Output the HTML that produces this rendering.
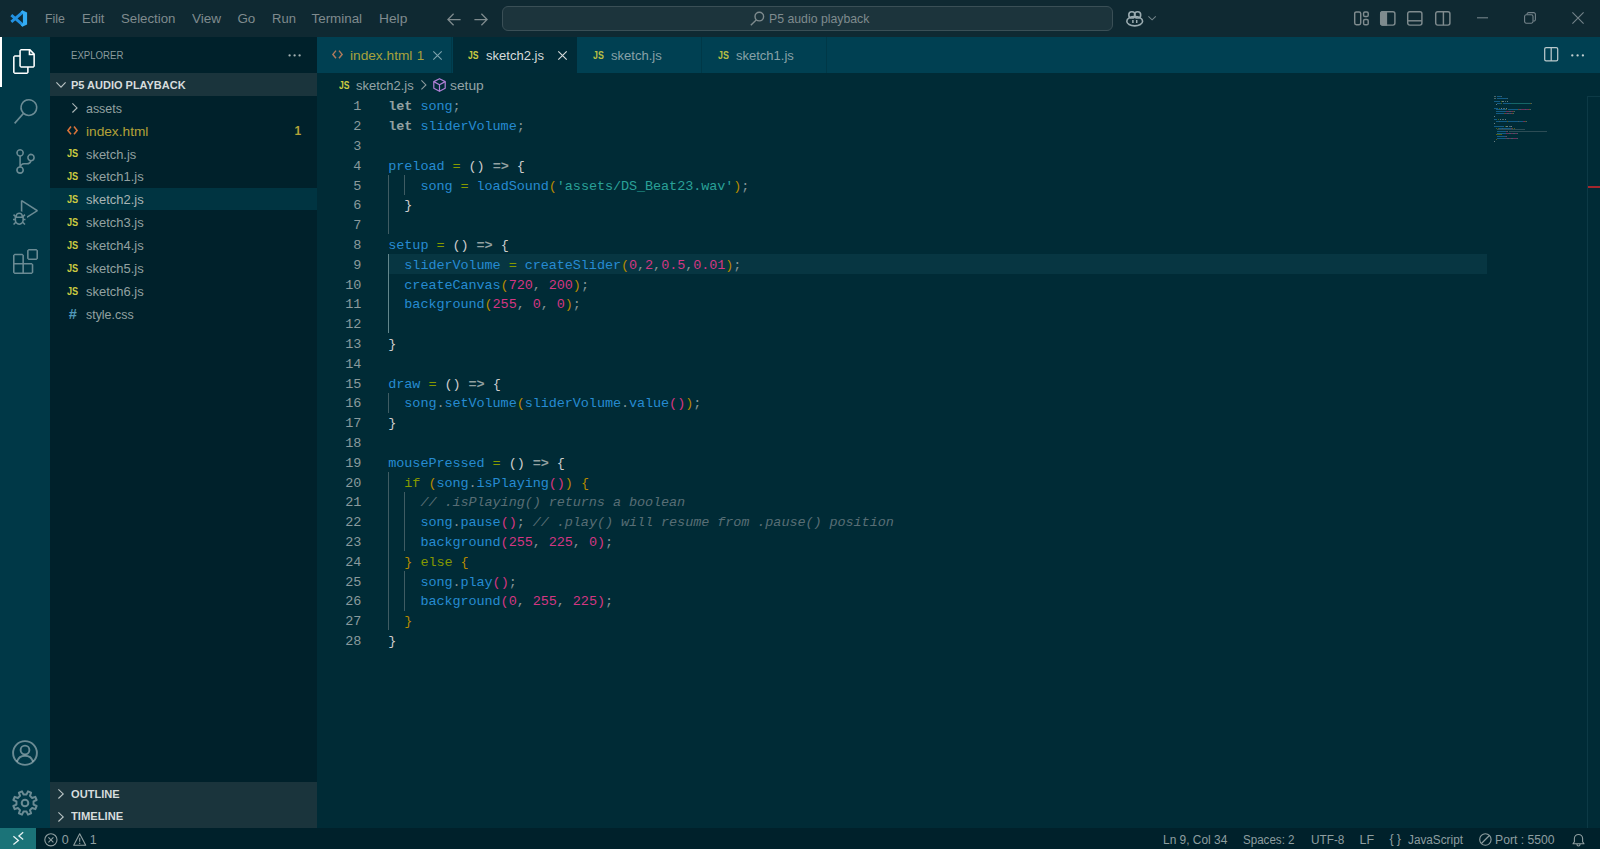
<!DOCTYPE html>
<html lang="en">
<head>
<meta charset="utf-8">
<title>sketch2.js - P5 audio playback - Visual Studio Code</title>
<style>
*{box-sizing:border-box;margin:0;padding:0}
html,body{width:1600px;height:849px;overflow:hidden;background:#002B36}
body{position:relative;font-family:"Liberation Sans",sans-serif;font-size:13.4px;color:#93A1A1;line-height:1}
svg{display:block;position:absolute;overflow:visible}
.t{position:absolute;white-space:pre;line-height:20px;height:20px;transform-origin:0 50%}
.bx{position:absolute}
/* title bar */
#titlebar{position:absolute;left:0;top:0;width:1600px;height:36.5px;background:#0F2932}
#cmd{position:absolute;left:502.3px;top:5.6px;width:610.4px;height:25.3px;border:1px solid #3A4F56;border-radius:6px;background:#1C343C}
/* activity bar */
#activity{position:absolute;left:0;top:36.5px;width:50px;height:791.3px;background:#003847}
#activity .ind{position:absolute;left:0;top:0;width:2px;height:50px;background:#fff}
/* side bar */
#sidebar{position:absolute;left:50px;top:36.5px;width:266.9px;height:791.3px;background:#00212B}
.sechead{position:absolute;left:50px;width:266.9px;height:22.9px;background:#1A343C}
.rowsel{position:absolute;left:50px;width:266.9px;height:22.9px;background:#003441}
/* editor */
#tabs{position:absolute;left:316.9px;top:36.5px;width:1283.1px;height:36.4px;background:#004052}
.tab{position:absolute;top:36.5px;height:36.4px;background:#004052;border-right:1px solid #003847}
.tab.active{background:#002B37;border-right:none}
#code{position:absolute;left:0;top:0;width:1600px;height:849px;font-family:"Liberation Mono",monospace;font-size:13.5px;letter-spacing:-0.08px;pointer-events:none}
.hl{position:absolute;left:388.8px;top:253.9px;width:1098.5px;height:19.9px;background:#073642}
.ln{position:absolute;left:316.9px;width:44.3px;text-align:right;height:19.8px;line-height:19.8px;color:#8A9B9D}
.ln.cur{color:#949494}
.cl{position:absolute;left:388.3px;height:19.8px;line-height:19.8px;white-space:pre;color:#839496}
.k{color:#93A1A1;font-weight:700}.v{color:#268BD2}.o{color:#859900}.s{color:#2AA198}.n{color:#D33682}
.c{color:#586E75;font-style:italic}.p{color:#839496}.b1{color:#CDCDCD}.b2{color:#B58900}.b3{color:#D33682}
.ig{position:absolute;width:1px;background:#3F5C63}
.ig.act{background:#62868C}
#minimap{position:absolute;left:0;top:0;opacity:.5}
#minimap i{position:absolute;height:1px;display:block}
/* status bar */
#status{position:absolute;left:0;top:827.8px;width:1600px;height:21.2px;background:#00212B}
#remote{position:absolute;left:0;top:0;width:36px;height:21.2px;background:#1B7378}
</style>
</head>
<body>
<div id="titlebar"><div id="cmd"></div></div>
<div id="activity"><div class="ind"></div></div>
<div id="sidebar"></div>
<div class="sechead" style="top:73px"></div>
<div class="rowsel" style="top:187.5px"></div>
<div class="sechead" style="top:782px"></div>
<div class="sechead" style="top:804.9px"></div>
<div id="tabs"></div>
<div class="tab" style="left:316.9px;width:135.6px"></div>
<div class="tab active" style="left:452.5px;width:124.8px"></div>
<div class="tab" style="left:577.3px;width:124.9px"></div>
<div class="tab" style="left:702.2px;width:125.1px"></div>
<div id="status"><div id="remote"></div></div>
<div class="hl"></div>
<!-- vscode logo -->
<svg style="left:10px;top:9.700px" width="17.300" height="17" viewBox="0 0 17.300 17"><path d="M1.300 5.200 13.400 15.300M1.300 11.800 13.400 1.700" fill="none" stroke="#2292E2" stroke-width="2.900"/><path d="M12.300.300 17.100 2.500v12l-4.800 2.200-1.700-1.600 2.300-1.700V3.600L10.600 1.900z" fill="#33ACF4"/></svg>
<!-- nav arrows -->
<svg style="left:446.5px;top:12.5px" width="14" height="13" viewBox="0 0 14 13" fill="none" stroke="#7F8B8E" stroke-width="1.25"><path d="M6.6.8.9 6.5l5.7 5.7M1 6.5h12.6"/></svg>
<svg style="left:473.5px;top:12.5px" width="14" height="13" viewBox="0 0 14 13" fill="none" stroke="#7F8B8E" stroke-width="1.25"><path d="M7.4.8l5.7 5.7-5.7 5.7M13 6.5H.4"/></svg>
<!-- search in command center -->
<svg style="left:749.5px;top:10.5px" width="15" height="15" viewBox="0 0 15 15" fill="none" stroke="#7F8B8E" stroke-width="1.400"><circle cx="9.3" cy="5.600" r="4.300"/><path d="M6.2 8.9.8 14.3"/></svg>
<!-- copilot -->
<svg style="left:1126px;top:10.900px" width="18" height="16" viewBox="0 0 18 16" fill="none" stroke="#9AABB0" stroke-width="1.600"><ellipse cx="8.700" cy="10.200" rx="7.900" ry="4.700"/><circle cx="5.900" cy="3.900" r="3.100"/><circle cx="11.600" cy="3.900" r="3.100"/><path d="M6.900 8.900v3M10.700 8.900v3" stroke-width="1.500"/></svg>
<svg style="left:1147.600px;top:16px" width="9" height="5" viewBox="0 0 9 5" fill="none" stroke="#73848A" stroke-width="1.050"><path d="M.4.400l3.700 3.500L7.800.400"/></svg>
<!-- layout controls -->
<svg style="left:1353.8px;top:11.2px" width="15" height="15" viewBox="0 0 15 15" fill="none" stroke="#7F8B8E" stroke-width="1.450"><rect x=".7" y=".9" width="6" height="12.800" rx="1.6"/><rect x="9.6" y=".9" width="4.600" height="4.600" rx="1.300"/><rect x="9.6" y="8.400" width="4.600" height="5.300" rx="1.300"/></svg>
<svg style="left:1380.3px;top:11px" width="16" height="15" viewBox="0 0 16 15" fill="none" stroke="#7F8B8E" stroke-width="1.450"><rect x=".7" y=".7" width="14.200" height="13.400" rx="2"/><path d="M.7 2.500a1.800 1.800 0 0 1 1.800-1.800H6.400v13.400H2.500a1.800 1.800 0 0 1-1.800-1.800z" fill="#7F8B8E"/></svg>
<svg style="left:1407.4px;top:11px" width="16" height="15" viewBox="0 0 16 15" fill="none" stroke="#7F8B8E" stroke-width="1.450"><rect x=".7" y=".7" width="14.200" height="13.400" rx="2"/><path d="M.7 9.800h14.200"/></svg>
<svg style="left:1434.6px;top:11px" width="16" height="15" viewBox="0 0 16 15" fill="none" stroke="#7F8B8E" stroke-width="1.450"><rect x=".7" y=".7" width="14.200" height="13.400" rx="2"/><path d="M8.400.7v13.400"/></svg>
<!-- window controls -->
<svg style="left:1477.3px;top:16.5px" width="11" height="2" viewBox="0 0 11 2"><path d="M0 .8h11" stroke="#74838A" stroke-width="1.1"/></svg>
<svg style="left:1523.6px;top:12.2px" width="12" height="12" viewBox="0 0 12 12" fill="none" stroke="#74838A" stroke-width="1.1"><rect x=".6" y="2.800" width="8.400" height="8.400" rx="1.600"/><path d="M3 2.500V2.200A1.600 1.600 0 0 1 4.600.6h5A1.800 1.800 0 0 1 11.400 2.400v5a1.600 1.600 0 0 1-1.600 1.600H9.300"/></svg>
<svg style="left:1572px;top:12.2px" width="12" height="12" viewBox="0 0 12 12" fill="none" stroke="#74838A" stroke-width="1.1"><path d="M.4.400l11.200 11.200M11.600.400.400 11.600"/></svg>
<!-- activity bar -->
<svg style="left:12.3px;top:49.200px" width="25" height="25" viewBox="0 0 24 24" fill="#FFFFFF"><path d="M17.500 0h-9L7 1.500V6H2.500L1 7.500v15.070L2.500 24h12.070L16 22.570V18h4.700l1.300-1.430V4.500L17.500 0zm0 2.120l2.380 2.380H17.500V2.120zm-3 20.380h-12v-15H7v9.070L8.500 18h6v4.500zm6-6h-12v-15H16V6h4.500v10.500z"/></svg>
<svg style="left:13px;top:99px" width="25" height="25" viewBox="0 0 24 24" fill="rgba(255,255,255,.42)"><path d="M15.250 0a8.250 8.250 0 0 0-6.180 13.720L1 22.880l1.120 1 8.050-9.120A8.251 8.251 0 1 0 15.250.010V0zm0 15a6.750 6.750 0 1 1 0-13.500 6.750 6.750 0 0 1 0 13.500z"/></svg>
<svg style="left:12.5px;top:149.300px" width="25" height="25" viewBox="0 0 24 24" fill="rgba(255,255,255,.42)"><path d="M21.007 8.222A3.738 3.738 0 0 0 15.045 5.200a3.737 3.737 0 0 0 1.156 6.583 2.988 2.988 0 0 1-2.668 1.670h-2.990a4.456 4.456 0 0 0-2.989 1.165V7.400a3.737 3.737 0 1 0-1.494 0v9.117a3.776 3.776 0 1 0 1.816.099 2.990 2.990 0 0 1 2.668-1.667h2.990a4.484 4.484 0 0 0 4.223-3.039 3.736 3.736 0 0 0 3.250-3.687zM4.565 3.738a2.242 2.242 0 1 1 4.484 0 2.242 2.242 0 0 1-4.484 0zm4.484 16.441a2.242 2.242 0 1 1-4.484 0 2.242 2.242 0 0 1 4.484 0zm8.221-9.715a2.242 2.242 0 1 1 0-4.485 2.242 2.242 0 0 1 0 4.485z"/></svg>
<svg style="left:12.5px;top:199.700px" width="25" height="25" viewBox="0 0 24 24" fill="rgba(255,255,255,.42)"><path d="M10.940 13.500l-1.320 1.320a3.730 3.730 0 0 0-7.240 0L1.060 13.500 0 14.560l1.720 1.720-.22.220V18H0v1.500h1.500v.080c.077.489.214.966.410 1.420L0 22.940 1.060 24l1.650-1.650A4.308 4.308 0 0 0 6 24a4.310 4.310 0 0 0 3.290-1.650L10.940 24 12 22.940 10.090 21c.198-.464.336-.951.410-1.450v-.1H12V18h-1.500v-1.500l-.22-.22L12 14.560l-1.060-1.060zM6 13.500a2.250 2.250 0 0 1 2.250 2.250h-4.500A2.250 2.250 0 0 1 6 13.500zm3 6a3.330 3.330 0 0 1-3 3 3.330 3.330 0 0 1-3-3v-2.250h6v2.250zm14.760-9.900v1.260L13.500 17.370V15.600l8.500-5.370L9 2v9.460a5.070 5.070 0 0 0-1.500-.72V.630L8.640 0l15.120 9.600z"/></svg>
<svg style="left:12.500px;top:249.200px" width="25" height="25" viewBox="0 0 24 24" fill="rgba(255,255,255,.42)"><path d="M13.500 1.500L15 0h7.500L24 1.500V9l-1.500 1.500H15L13.500 9V1.500zm1.500 0V9h7.500V1.500H15zM0 15V6l1.500-1.500H9L10.500 6v7.500H18l1.500 1.500v7.500L18 24H1.500L0 22.500V15zm9-1.500V6H1.500v7.500H9zM9 15H1.500v7.500H9V15zm1.500 7.500H18V15h-7.500v7.500z"/></svg>
<!-- account -->
<svg style="left:12.300px;top:739.800px" width="26" height="26" viewBox="0 0 26 26" fill="none" stroke="rgba(255,255,255,.42)" stroke-width="1.900"><circle cx="13" cy="13" r="11.900"/><circle cx="13" cy="10" r="4.400"/><path d="M5 21.500c1.200-3.600 4.200-5.800 8-5.800s6.800 2.200 8 5.800"/></svg>
<svg style="left:12px;top:790.300px" width="26" height="26" viewBox="0 0 26 26" fill="none" stroke="rgba(255,255,255,.42)" stroke-width="2" stroke-linejoin="round"><path d="M21.56 14.54 L24.62 16.00 L23.34 19.10 L20.15 17.96 L17.96 20.15 L19.10 23.34 L16.00 24.62 L14.54 21.56 L11.46 21.56 L10.00 24.62 L6.90 23.34 L8.04 20.15 L5.85 17.96 L2.66 19.10 L1.38 16.00 L4.44 14.54 L4.44 11.46 L1.38 10.00 L2.66 6.90 L5.85 8.04 L8.04 5.85 L6.90 2.66 L10.00 1.38 L11.46 4.44 L14.54 4.44 L16.00 1.38 L19.10 2.66 L17.96 5.85 L20.15 8.04 L23.34 6.90 L24.62 10.00 L21.56 11.46Z"/><circle cx="13" cy="13" r="3.300"/></svg>
<!-- sidebar chevrons / ellipsis -->
<svg style="left:287.500px;top:54px" width="14" height="3" viewBox="0 0 14 3" fill="#A3B0B1"><circle cx="1.600" cy="1.400" r="1.150"/><circle cx="6.600" cy="1.400" r="1.150"/><circle cx="11.600" cy="1.400" r="1.150"/></svg>
<svg style="left:55.500px;top:82px" width="10" height="6" viewBox="0 0 10 6" fill="none" stroke="#B9C3C4" stroke-width="1.150"><path d="M.4.400l4.600 4.800L9.600.400"/></svg>
<svg style="left:72.200px;top:102.800px" width="6" height="10" viewBox="0 0 6 10" fill="none" stroke="#AAB6B7" stroke-width="1.150"><path d="M.4.400l4.600 4.500L.4 9.500"/></svg>
<svg style="left:57.800px;top:788.600px" width="6" height="10" viewBox="0 0 6 10" fill="none" stroke="#B9C3C4" stroke-width="1.150"><path d="M.4.400l4.800 4.500L.4 9.500"/></svg>
<svg style="left:57.800px;top:811.500px" width="6" height="10" viewBox="0 0 6 10" fill="none" stroke="#B9C3C4" stroke-width="1.150"><path d="M.4.400l4.800 4.500L.4 9.500"/></svg>
<!-- tab close buttons -->
<svg style="left:433.200px;top:50.800px" width="9" height="9" viewBox="0 0 9 9" fill="none" stroke="#7DA3AD" stroke-width="1.100"><path d="M.3.300l8.400 8.400M8.700.300.300 8.700"/></svg>
<svg style="left:558.400px;top:50.800px" width="9" height="9" viewBox="0 0 9 9" fill="none" stroke="#D6DBDB" stroke-width="1.150"><path d="M.3.300l8.400 8.400M8.700.300.300 8.700"/></svg>
<!-- editor actions -->
<svg style="left:1544.200px;top:47.400px" width="15" height="15" viewBox="0 0 15 15" fill="none" stroke="#B9C9CC" stroke-width="1.250"><rect x=".7" y=".7" width="13" height="13.200" rx="1.400"/><path d="M7.200.7v13.200"/></svg>
<svg style="left:1571.200px;top:53.700px" width="14" height="3" viewBox="0 0 14 3" fill="#C3D0D2"><circle cx="1.300" cy="1.400" r="1.150"/><circle cx="6.600" cy="1.400" r="1.150"/><circle cx="11.900" cy="1.400" r="1.150"/></svg>
<!-- breadcrumbs -->
<svg style="left:420.600px;top:80.400px" width="6" height="10" viewBox="0 0 6 10" fill="none" stroke="#8C9C9E" stroke-width="1.100"><path d="M.4.400l4.500 4.500L.4 9.400"/></svg>
<svg style="left:432.600px;top:78.200px" width="13" height="14" viewBox="0 0 13 14" fill="none" stroke="#B180D7" stroke-width="1.200" stroke-linejoin="round"><path d="M6.500.700.800 3.600v6.600l5.700 3.100 5.700-3.100V3.600z"/><path d="M.8 3.600l5.700 3.100 5.700-3.100M6.500 6.700v6.600"/></svg>
<!-- status bar icons -->
<svg style="left:12.800px;top:832.400px" width="11" height="13" viewBox="0 0 11 13" fill="none" stroke="#E4F1F1" stroke-width="1.300"><path d="M.4 4.300l5 4.200-5 4.100M10.200.300 5.900 4l4.300 3.600"/></svg>
<svg style="left:44.400px;top:832.800px" width="14" height="14" viewBox="0 0 14 14" fill="none" stroke="#8E9EA0" stroke-width="1.100"><circle cx="6.900" cy="6.800" r="6.100"/><path d="M4.400 4.300l5 5M9.400 4.300l-5 5"/></svg>
<svg style="left:73px;top:832.900px" width="14" height="13" viewBox="0 0 14 13" fill="none" stroke="#8E9EA0" stroke-width="1.100" stroke-linejoin="round"><path d="M6.700.800.700 12.300h12z"/><path d="M6.700 4.800v4M6.700 9.800v1.300"/></svg>
<svg style="left:1479px;top:833.000px" width="13" height="13" viewBox="0 0 13 13" fill="none" stroke="#8E9EA0" stroke-width="1.100"><circle cx="6.400" cy="6.500" r="5.700"/><path d="M2.400 10.500l8-8"/></svg>
<svg style="left:1572px;top:832.600px" width="13" height="14" viewBox="0 0 13 14" fill="none" stroke="#8E9EA0" stroke-width="1.100" stroke-linejoin="round"><path d="M1 10.800h11l-1.400-2.100V5.600a4.100 4.100 0 0 0-8.200 0v3.100z"/><path d="M5 11v.500a1.500 1.500 0 0 0 3 0V11"/></svg>
<!-- scrollbar / overview ruler -->
<div class="bx" style="left:1587px;top:96px;width:1px;height:731.800px;background:#0D3A46"></div>
<div class="bx" style="left:1587px;top:96px;width:13px;height:1px;background:#0D3A46"></div>
<div class="bx" style="left:1588px;top:186px;width:12px;height:2px;background:#A3262D"></div>
<!-- html file icons -->
<svg style="left:67.400px;top:126.300px" width="11" height="9" viewBox="0 0 11 9" fill="none" stroke="#D9733A" stroke-width="1.550"><path d="M4 .6.900 4.400 4 8.200M7 .6l3.100 3.800L7 8.200"/></svg>
<svg style="left:332.200px;top:50.200px" width="11" height="9" viewBox="0 0 11 9" fill="none" stroke="#B07A5C" stroke-width="1.450"><path d="M4 .6.900 4.400 4 8.200M7 .6l3.100 3.800L7 8.200"/></svg>

<div class="t" style="left:45.1px;top:9.2px;font-size:13.4px;color:#7F8B8E;transform:scaleX(0.922)">File</div>
<div class="t" style="left:82.0px;top:9.2px;font-size:13.4px;color:#7F8B8E;transform:scaleX(0.971)">Edit</div>
<div class="t" style="left:121.0px;top:9.2px;font-size:13.4px;color:#7F8B8E;transform:scaleX(0.987)">Selection</div>
<div class="t" style="left:191.9px;top:9.2px;font-size:13.4px;color:#7F8B8E;transform:scaleX(1.011)">View</div>
<div class="t" style="left:237.4px;top:9.2px;font-size:13.4px;color:#7F8B8E">Go</div>
<div class="t" style="left:271.5px;top:9.2px;font-size:13.4px;color:#7F8B8E;transform:scaleX(0.972)">Run</div>
<div class="t" style="left:311.5px;top:9.2px;font-size:13.4px;color:#7F8B8E">Terminal</div>
<div class="t" style="left:378.5px;top:9.2px;font-size:13.4px;color:#7F8B8E;transform:scaleX(1.027)">Help</div>
<div class="t" style="left:768.9px;top:9.2px;font-size:13.4px;color:#7F8B8E;transform:scaleX(0.917)">P5 audio playback</div>
<div class="t" style="left:70.8px;top:45.3px;font-size:11.4px;color:#8A9A9C;transform:scaleX(0.845)">EXPLORER</div>
<div class="t" style="left:70.8px;top:75.0px;font-size:11.4px;color:#D6DCDC;transform:scaleX(0.965);font-weight:700">P5 AUDIO PLAYBACK</div>
<div class="t" style="left:70.9px;top:784.0px;font-size:11.4px;color:#D6DCDC;transform:scaleX(0.974);font-weight:700">OUTLINE</div>
<div class="t" style="left:70.9px;top:805.7px;font-size:11.4px;color:#D6DCDC;transform:scaleX(0.984);font-weight:700">TIMELINE</div>
<div class="t" style="left:85.8px;top:98.7px;font-size:13.4px;color:#93A1A1;transform:scaleX(0.928)">assets</div>
<div class="t" style="left:85.8px;top:121.6px;font-size:13.4px;color:#B3A138;transform:scaleX(1.022)">index.html</div>
<div class="t" style="left:294.5px;top:121.1px;font-size:12px;color:#B3A138;font-weight:700">1</div>
<div class="t" style="left:85.8px;top:144.5px;font-size:13.4px;color:#93A1A1;transform:scaleX(0.964)">sketch.js</div>
<div class="t" style="left:67.3px;top:143.1px;font-size:11px;color:#CBCB41;transform:scaleX(0.832);font-weight:700">JS</div>
<div class="t" style="left:85.8px;top:167.4px;font-size:13.4px;color:#93A1A1;transform:scaleX(0.969)">sketch1.js</div>
<div class="t" style="left:67.3px;top:166.0px;font-size:11px;color:#CBCB41;transform:scaleX(0.832);font-weight:700">JS</div>
<div class="t" style="left:85.8px;top:190.3px;font-size:13.4px;color:#A9B5B5;transform:scaleX(0.969)">sketch2.js</div>
<div class="t" style="left:67.3px;top:188.9px;font-size:11px;color:#CBCB41;transform:scaleX(0.832);font-weight:700">JS</div>
<div class="t" style="left:85.8px;top:213.2px;font-size:13.4px;color:#93A1A1;transform:scaleX(0.969)">sketch3.js</div>
<div class="t" style="left:67.3px;top:211.8px;font-size:11px;color:#CBCB41;transform:scaleX(0.832);font-weight:700">JS</div>
<div class="t" style="left:85.8px;top:236.1px;font-size:13.4px;color:#93A1A1;transform:scaleX(0.969)">sketch4.js</div>
<div class="t" style="left:67.3px;top:234.7px;font-size:11px;color:#CBCB41;transform:scaleX(0.832);font-weight:700">JS</div>
<div class="t" style="left:85.8px;top:259.0px;font-size:13.4px;color:#93A1A1;transform:scaleX(0.969)">sketch5.js</div>
<div class="t" style="left:67.3px;top:257.6px;font-size:11px;color:#CBCB41;transform:scaleX(0.832);font-weight:700">JS</div>
<div class="t" style="left:85.8px;top:281.9px;font-size:13.4px;color:#93A1A1;transform:scaleX(0.969)">sketch6.js</div>
<div class="t" style="left:67.3px;top:280.5px;font-size:11px;color:#CBCB41;transform:scaleX(0.832);font-weight:700">JS</div>
<div class="t" style="left:85.8px;top:304.8px;font-size:13.4px;color:#93A1A1;transform:scaleX(0.927)">style.css</div>
<div class="t" style="left:68.7px;top:304.0px;font-size:14.5px;color:#519ABA;font-weight:700">#</div>
<div class="t" style="left:350.3px;top:45.8px;font-size:13.4px;color:#A8A23C;transform:scaleX(1.022)">index.html</div>
<div class="t" style="left:416.7px;top:45.8px;font-size:13.4px;color:#A8A23C">1</div>
<div class="t" style="left:468.1px;top:44.5px;font-size:11px;color:#CBCB41;transform:scaleX(0.780);font-weight:700">JS</div>
<div class="t" style="left:485.8px;top:45.8px;font-size:13.4px;color:#D6DBDB;transform:scaleX(0.974)">sketch2.js</div>
<div class="t" style="left:593.0px;top:44.5px;font-size:11px;color:#B8BF44;transform:scaleX(0.802);font-weight:700">JS</div>
<div class="t" style="left:611.0px;top:45.8px;font-size:13.4px;color:#88A2A8;transform:scaleX(0.975)">sketch.js</div>
<div class="t" style="left:718.1px;top:44.5px;font-size:11px;color:#B8BF44;transform:scaleX(0.809);font-weight:700">JS</div>
<div class="t" style="left:736.3px;top:45.8px;font-size:13.4px;color:#88A2A8;transform:scaleX(0.971)">sketch1.js</div>
<div class="t" style="left:338.5px;top:74.5px;font-size:11px;color:#CBCB41;transform:scaleX(0.780);font-weight:700">JS</div>
<div class="t" style="left:356.4px;top:75.7px;font-size:13.4px;color:#94A4A6;transform:scaleX(0.969)">sketch2.js</div>
<div class="t" style="left:450.1px;top:75.7px;font-size:13.4px;color:#94A4A6;transform:scaleX(1.029)">setup</div>
<div class="t" style="left:61.8px;top:829.6px;font-size:12.5px;color:#8E9EA0">0</div>
<div class="t" style="left:89.8px;top:829.6px;font-size:12.5px;color:#8E9EA0">1</div>
<div class="t" style="left:1162.6px;top:829.6px;font-size:12.5px;color:#8E9EA0;transform:scaleX(0.954)">Ln 9, Col 34</div>
<div class="t" style="left:1243.2px;top:829.6px;font-size:12.5px;color:#8E9EA0;transform:scaleX(0.927)">Spaces: 2</div>
<div class="t" style="left:1311.1px;top:829.6px;font-size:12.5px;color:#8E9EA0;transform:scaleX(0.943)">UTF-8</div>
<div class="t" style="left:1359.6px;top:829.6px;font-size:12.5px;color:#8E9EA0">LF</div>
<div class="t" style="left:1389.6px;top:829.1px;font-size:12.5px;color:#8E9EA0;letter-spacing:3px">{}</div>
<div class="t" style="left:1408.2px;top:829.6px;font-size:12.5px;color:#8E9EA0;transform:scaleX(0.942)">JavaScript</div>
<div class="t" style="left:1495.4px;top:829.6px;font-size:12.5px;color:#8E9EA0;transform:scaleX(0.975)">Port : 5500</div>
<div id="code">
<div class="ln" style="top:97.40px">1</div>
<div class="cl" style="top:97.40px"><span class="k">let</span> <span class="v">song</span><span class="p">;</span></div>
<div class="ln" style="top:117.20px">2</div>
<div class="cl" style="top:117.20px"><span class="k">let</span> <span class="v">sliderVolume</span><span class="p">;</span></div>
<div class="ln" style="top:137.00px">3</div>
<div class="ln" style="top:156.80px">4</div>
<div class="cl" style="top:156.80px"><span class="v">preload</span> <span class="o">=</span> <span class="b1">()</span> <span class="k">=&gt;</span> <span class="b1">{</span></div>
<div class="ln" style="top:176.60px">5</div>
<div class="cl" style="top:176.60px">    <span class="v">song</span> <span class="o">=</span> <span class="v">loadSound</span><span class="b2">(</span><span class="s">&#x27;assets/DS_Beat23.wav&#x27;</span><span class="b2">)</span><span class="p">;</span></div>
<div class="ln" style="top:196.40px">6</div>
<div class="cl" style="top:196.40px">  <span class="b1">}</span></div>
<div class="ln" style="top:216.20px">7</div>
<div class="ln" style="top:236.00px">8</div>
<div class="cl" style="top:236.00px"><span class="v">setup</span> <span class="o">=</span> <span class="b1">()</span> <span class="k">=&gt;</span> <span class="b1">{</span></div>
<div class="ln" style="top:255.80px">9</div>
<div class="cl" style="top:255.80px">  <span class="v">sliderVolume</span> <span class="o">=</span> <span class="v">createSlider</span><span class="b2">(</span><span class="n">0</span><span class="p">,</span><span class="n">2</span><span class="p">,</span><span class="n">0.5</span><span class="p">,</span><span class="n">0.01</span><span class="b2">)</span><span class="p">;</span></div>
<div class="ln" style="top:275.60px">10</div>
<div class="cl" style="top:275.60px">  <span class="v">createCanvas</span><span class="b2">(</span><span class="n">720</span><span class="p">, </span><span class="n">200</span><span class="b2">)</span><span class="p">;</span></div>
<div class="ln" style="top:295.40px">11</div>
<div class="cl" style="top:295.40px">  <span class="v">background</span><span class="b2">(</span><span class="n">255</span><span class="p">, </span><span class="n">0</span><span class="p">, </span><span class="n">0</span><span class="b2">)</span><span class="p">;</span></div>
<div class="ln" style="top:315.20px">12</div>
<div class="ln" style="top:335.00px">13</div>
<div class="cl" style="top:335.00px"><span class="b1">}</span></div>
<div class="ln" style="top:354.80px">14</div>
<div class="ln" style="top:374.60px">15</div>
<div class="cl" style="top:374.60px"><span class="v">draw</span> <span class="o">=</span> <span class="b1">()</span> <span class="k">=&gt;</span> <span class="b1">{</span></div>
<div class="ln" style="top:394.40px">16</div>
<div class="cl" style="top:394.40px">  <span class="v">song</span><span class="p">.</span><span class="v">setVolume</span><span class="b2">(</span><span class="v">sliderVolume</span><span class="p">.</span><span class="v">value</span><span class="b3">()</span><span class="b2">)</span><span class="p">;</span></div>
<div class="ln" style="top:414.20px">17</div>
<div class="cl" style="top:414.20px"><span class="b1">}</span></div>
<div class="ln" style="top:434.00px">18</div>
<div class="ln" style="top:453.80px">19</div>
<div class="cl" style="top:453.80px"><span class="v">mousePressed</span> <span class="o">=</span> <span class="b1">()</span> <span class="k">=&gt;</span> <span class="b1">{</span></div>
<div class="ln" style="top:473.60px">20</div>
<div class="cl" style="top:473.60px">  <span class="o">if</span> <span class="b2">(</span><span class="v">song</span><span class="p">.</span><span class="v">isPlaying</span><span class="b3">()</span><span class="b2">)</span> <span class="b2">{</span></div>
<div class="ln" style="top:493.40px">21</div>
<div class="cl" style="top:493.40px">    <span class="c">// .isPlaying() returns a boolean</span></div>
<div class="ln" style="top:513.20px">22</div>
<div class="cl" style="top:513.20px">    <span class="v">song</span><span class="p">.</span><span class="v">pause</span><span class="b3">()</span><span class="p">;</span> <span class="c">// .play() will resume from .pause() position</span></div>
<div class="ln" style="top:533.00px">23</div>
<div class="cl" style="top:533.00px">    <span class="v">background</span><span class="b3">(</span><span class="n">255</span><span class="p">, </span><span class="n">225</span><span class="p">, </span><span class="n">0</span><span class="b3">)</span><span class="p">;</span></div>
<div class="ln" style="top:552.80px">24</div>
<div class="cl" style="top:552.80px">  <span class="b2">}</span> <span class="o">else</span> <span class="b2">{</span></div>
<div class="ln" style="top:572.60px">25</div>
<div class="cl" style="top:572.60px">    <span class="v">song</span><span class="p">.</span><span class="v">play</span><span class="b3">()</span><span class="p">;</span></div>
<div class="ln" style="top:592.40px">26</div>
<div class="cl" style="top:592.40px">    <span class="v">background</span><span class="b3">(</span><span class="n">0</span><span class="p">, </span><span class="n">255</span><span class="p">, </span><span class="n">225</span><span class="b3">)</span><span class="p">;</span></div>
<div class="ln" style="top:612.20px">27</div>
<div class="cl" style="top:612.20px">  <span class="b2">}</span></div>
<div class="ln" style="top:632.00px">28</div>
<div class="cl" style="top:632.00px"><span class="b1">}</span></div>
<div class="ig" style="left:388.0px;top:175.00px;height:59.40px"></div>
<div class="ig" style="left:404.0px;top:175.00px;height:19.80px"></div>
<div class="ig act" style="left:388.0px;top:254.20px;height:79.20px"></div>
<div class="ig" style="left:388.0px;top:392.80px;height:19.80px"></div>
<div class="ig" style="left:388.0px;top:472.00px;height:158.40px"></div>
<div class="ig" style="left:404.0px;top:491.80px;height:59.40px"></div>
<div class="ig" style="left:404.0px;top:571.00px;height:39.60px"></div>
</div>
<div id="minimap"><i style="left:1493.8px;top:96px;width:2.5px;background:#93A1A1"></i><i style="left:1497.2px;top:96px;width:3.4px;background:#268BD2"></i><i style="left:1500.5px;top:96px;width:0.8px;background:#839496"></i><i style="left:1493.8px;top:98px;width:2.5px;background:#93A1A1"></i><i style="left:1497.2px;top:98px;width:10.1px;background:#268BD2"></i><i style="left:1507.2px;top:98px;width:0.8px;background:#839496"></i><i style="left:1493.8px;top:101px;width:5.9px;background:#268BD2"></i><i style="left:1500.5px;top:101px;width:0.8px;background:#859900"></i><i style="left:1502.2px;top:101px;width:1.7px;background:#CDCDCD"></i><i style="left:1504.7px;top:101px;width:1.7px;background:#93A1A1"></i><i style="left:1507.2px;top:101px;width:0.8px;background:#CDCDCD"></i><i style="left:1497.2px;top:103px;width:3.4px;background:#268BD2"></i><i style="left:1501.4px;top:103px;width:0.8px;background:#859900"></i><i style="left:1503.0px;top:103px;width:7.6px;background:#268BD2"></i><i style="left:1510.6px;top:103px;width:0.8px;background:#B58900"></i><i style="left:1511.4px;top:103px;width:18.5px;background:#2AA198"></i><i style="left:1529.9px;top:103px;width:0.8px;background:#B58900"></i><i style="left:1530.8px;top:103px;width:0.8px;background:#839496"></i><i style="left:1495.5px;top:104px;width:0.8px;background:#CDCDCD"></i><i style="left:1493.8px;top:108px;width:4.2px;background:#268BD2"></i><i style="left:1498.8px;top:108px;width:0.8px;background:#859900"></i><i style="left:1500.5px;top:108px;width:1.7px;background:#CDCDCD"></i><i style="left:1503.0px;top:108px;width:1.7px;background:#93A1A1"></i><i style="left:1505.6px;top:108px;width:0.8px;background:#CDCDCD"></i><i style="left:1495.5px;top:109px;width:10.1px;background:#268BD2"></i><i style="left:1506.4px;top:109px;width:0.8px;background:#859900"></i><i style="left:1508.1px;top:109px;width:10.1px;background:#268BD2"></i><i style="left:1518.2px;top:109px;width:0.8px;background:#B58900"></i><i style="left:1519.0px;top:109px;width:0.8px;background:#D33682"></i><i style="left:1519.8px;top:109px;width:0.8px;background:#839496"></i><i style="left:1520.7px;top:109px;width:0.8px;background:#D33682"></i><i style="left:1521.5px;top:109px;width:0.8px;background:#839496"></i><i style="left:1522.4px;top:109px;width:2.5px;background:#D33682"></i><i style="left:1524.9px;top:109px;width:0.8px;background:#839496"></i><i style="left:1525.7px;top:109px;width:3.4px;background:#D33682"></i><i style="left:1529.1px;top:109px;width:0.8px;background:#B58900"></i><i style="left:1529.9px;top:109px;width:0.8px;background:#839496"></i><i style="left:1495.5px;top:111px;width:10.1px;background:#268BD2"></i><i style="left:1505.6px;top:111px;width:0.8px;background:#B58900"></i><i style="left:1506.4px;top:111px;width:2.5px;background:#D33682"></i><i style="left:1508.9px;top:111px;width:1.7px;background:#839496"></i><i style="left:1510.6px;top:111px;width:2.5px;background:#D33682"></i><i style="left:1513.1px;top:111px;width:0.8px;background:#B58900"></i><i style="left:1514.0px;top:111px;width:0.8px;background:#839496"></i><i style="left:1495.5px;top:113px;width:8.4px;background:#268BD2"></i><i style="left:1503.9px;top:113px;width:0.8px;background:#B58900"></i><i style="left:1504.7px;top:113px;width:2.5px;background:#D33682"></i><i style="left:1507.2px;top:113px;width:1.7px;background:#839496"></i><i style="left:1508.9px;top:113px;width:0.8px;background:#D33682"></i><i style="left:1509.8px;top:113px;width:1.7px;background:#839496"></i><i style="left:1511.4px;top:113px;width:0.8px;background:#D33682"></i><i style="left:1512.3px;top:113px;width:0.8px;background:#B58900"></i><i style="left:1513.1px;top:113px;width:0.8px;background:#839496"></i><i style="left:1493.8px;top:116px;width:0.8px;background:#CDCDCD"></i><i style="left:1493.8px;top:119px;width:3.4px;background:#268BD2"></i><i style="left:1498.0px;top:119px;width:0.8px;background:#859900"></i><i style="left:1499.7px;top:119px;width:1.7px;background:#CDCDCD"></i><i style="left:1502.2px;top:119px;width:1.7px;background:#93A1A1"></i><i style="left:1504.7px;top:119px;width:0.8px;background:#CDCDCD"></i><i style="left:1495.5px;top:121px;width:3.4px;background:#268BD2"></i><i style="left:1498.8px;top:121px;width:0.8px;background:#839496"></i><i style="left:1499.7px;top:121px;width:7.6px;background:#268BD2"></i><i style="left:1507.2px;top:121px;width:0.8px;background:#B58900"></i><i style="left:1508.1px;top:121px;width:10.1px;background:#268BD2"></i><i style="left:1518.2px;top:121px;width:0.8px;background:#839496"></i><i style="left:1519.0px;top:121px;width:4.2px;background:#268BD2"></i><i style="left:1523.2px;top:121px;width:1.7px;background:#D33682"></i><i style="left:1524.9px;top:121px;width:0.8px;background:#B58900"></i><i style="left:1525.7px;top:121px;width:0.8px;background:#839496"></i><i style="left:1493.8px;top:123px;width:0.8px;background:#CDCDCD"></i><i style="left:1493.8px;top:126px;width:10.1px;background:#268BD2"></i><i style="left:1504.7px;top:126px;width:0.8px;background:#859900"></i><i style="left:1506.4px;top:126px;width:1.7px;background:#CDCDCD"></i><i style="left:1508.9px;top:126px;width:1.7px;background:#93A1A1"></i><i style="left:1511.4px;top:126px;width:0.8px;background:#CDCDCD"></i><i style="left:1495.5px;top:128px;width:1.7px;background:#859900"></i><i style="left:1498.0px;top:128px;width:0.8px;background:#B58900"></i><i style="left:1498.8px;top:128px;width:3.4px;background:#268BD2"></i><i style="left:1502.2px;top:128px;width:0.8px;background:#839496"></i><i style="left:1503.0px;top:128px;width:7.6px;background:#268BD2"></i><i style="left:1510.6px;top:128px;width:1.7px;background:#D33682"></i><i style="left:1512.3px;top:128px;width:0.8px;background:#B58900"></i><i style="left:1514.0px;top:128px;width:0.8px;background:#B58900"></i><i style="left:1497.2px;top:129px;width:27.7px;background:#586E75"></i><i style="left:1497.2px;top:131px;width:3.4px;background:#268BD2"></i><i style="left:1500.5px;top:131px;width:0.8px;background:#839496"></i><i style="left:1501.4px;top:131px;width:4.2px;background:#268BD2"></i><i style="left:1505.6px;top:131px;width:1.7px;background:#D33682"></i><i style="left:1507.2px;top:131px;width:0.8px;background:#839496"></i><i style="left:1508.9px;top:131px;width:37.8px;background:#586E75"></i><i style="left:1497.2px;top:133px;width:8.4px;background:#268BD2"></i><i style="left:1505.6px;top:133px;width:0.8px;background:#D33682"></i><i style="left:1506.4px;top:133px;width:2.5px;background:#D33682"></i><i style="left:1508.9px;top:133px;width:1.7px;background:#839496"></i><i style="left:1510.6px;top:133px;width:2.5px;background:#D33682"></i><i style="left:1513.1px;top:133px;width:1.7px;background:#839496"></i><i style="left:1514.8px;top:133px;width:0.8px;background:#D33682"></i><i style="left:1515.6px;top:133px;width:0.8px;background:#D33682"></i><i style="left:1516.5px;top:133px;width:0.8px;background:#839496"></i><i style="left:1495.5px;top:134px;width:0.8px;background:#B58900"></i><i style="left:1497.2px;top:134px;width:3.4px;background:#859900"></i><i style="left:1501.4px;top:134px;width:0.8px;background:#B58900"></i><i style="left:1497.2px;top:136px;width:3.4px;background:#268BD2"></i><i style="left:1500.5px;top:136px;width:0.8px;background:#839496"></i><i style="left:1501.4px;top:136px;width:3.4px;background:#268BD2"></i><i style="left:1504.7px;top:136px;width:1.7px;background:#D33682"></i><i style="left:1506.4px;top:136px;width:0.8px;background:#839496"></i><i style="left:1497.2px;top:138px;width:8.4px;background:#268BD2"></i><i style="left:1505.6px;top:138px;width:0.8px;background:#D33682"></i><i style="left:1506.4px;top:138px;width:0.8px;background:#D33682"></i><i style="left:1507.2px;top:138px;width:1.7px;background:#839496"></i><i style="left:1508.9px;top:138px;width:2.5px;background:#D33682"></i><i style="left:1511.4px;top:138px;width:1.7px;background:#839496"></i><i style="left:1513.1px;top:138px;width:2.5px;background:#D33682"></i><i style="left:1515.6px;top:138px;width:0.8px;background:#D33682"></i><i style="left:1516.5px;top:138px;width:0.8px;background:#839496"></i><i style="left:1495.5px;top:139px;width:0.8px;background:#B58900"></i><i style="left:1493.8px;top:141px;width:0.8px;background:#CDCDCD"></i></div>
</body>
</html>
